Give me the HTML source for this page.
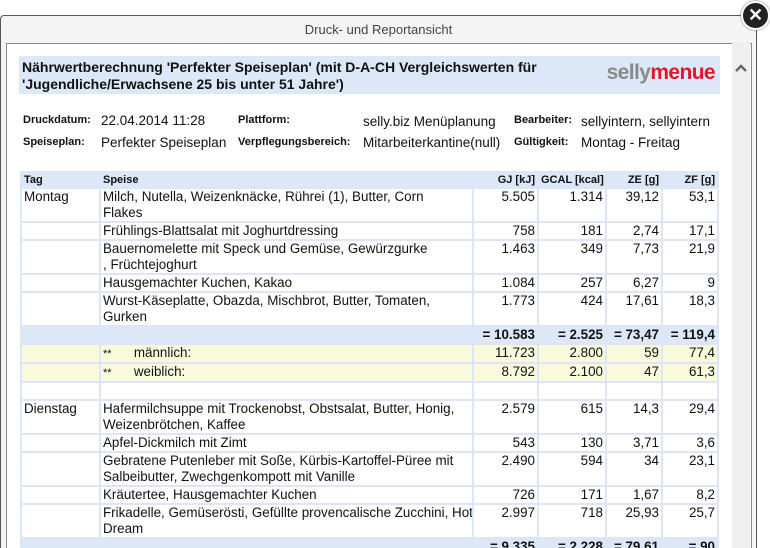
<!DOCTYPE html>
<html><head><meta charset="utf-8"><style>
*{margin:0;padding:0;box-sizing:border-box}
html,body{width:770px;height:548px;overflow:hidden}
body{background:#fff;font-family:"Liberation Sans",Arial,sans-serif;position:relative;color:#111}
.dlg{position:absolute;left:0;top:15px;width:757px;height:545px;border:1px solid #555;border-radius:4px 0 0 0;background:#f4f4f4}
.ttl{position:absolute;left:0;top:0;width:755px;height:28px;text-align:center;font-size:13px;line-height:28px;color:#444}
.inner{position:absolute;left:5px;top:27px;width:746px;height:530px;border:1px solid #888;background:#fff}
.sb{position:absolute;left:732px;top:42px;width:18px;height:506px;background:#efefef}
.close{position:absolute;left:741px;top:1px;width:29px;height:29px;border-radius:50%;background:#222;border:2px solid #fff;box-shadow:0 0 2px #666;color:#fff;font-size:18px;font-weight:bold;text-align:center;line-height:25px}
.hdr{position:absolute;left:19px;top:56px;width:701px;height:38px;background:#dce8f7}
.hdr .t{position:absolute;left:3px;top:3px;font-size:14px;font-weight:bold;line-height:17px;width:560px}
.logo{position:absolute;right:5px;top:5px;font-size:21px;font-weight:700;letter-spacing:-0.6px;line-height:24px}
.lb{position:absolute;font-size:11px;font-weight:bold}
.v{position:absolute;font-size:13.5px}
table{position:absolute;left:20px;top:171px;border-collapse:separate;border-spacing:2px;background:#dde6f4;table-layout:fixed;width:699px}
td{background:#fff;font-size:13.4px;line-height:16px;padding:0 2px;vertical-align:top;height:16px;white-space:nowrap;overflow:hidden}
td.n{text-align:right}
tr.h td{background:#dce8f7;font-size:11px;font-weight:bold;height:13px;line-height:14px}
tr.s td{background:#dce8f7;font-weight:bold}
tr.y td{background:#f8fadb}
</style></head><body>
<div class="dlg"><div class="ttl">Druck- und Reportansicht</div><div class="inner"></div></div>
<div class="sb"><svg width="18" height="20" style="position:absolute;left:0;top:16px"><path d="M4 13 L9 8 L14 13" stroke="#666" stroke-width="2.4" fill="none"/></svg></div>
<div class="close">✕</div>
<div class="hdr"><div class="t">Nährwertberechnung 'Perfekter Speiseplan' (mit D-A-CH Vergleichswerten für 'Jugendliche/Erwachsene 25 bis unter 51 Jahre')</div><div class="logo"><span style="color:#8a8a8a">selly</span><span style="color:#e4142b">menue</span></div></div>
<div class="lb" style="left:23px;top:114px">Druckdatum:</div><div class="v" style="left:101px;top:113px">22.04.2014 11:28</div>
<div class="lb" style="left:238px;top:114px">Plattform:</div><div class="v" style="left:363px;top:114px">selly.biz Menüplanung</div>
<div class="lb" style="left:514px;top:114px">Bearbeiter:</div><div class="v" style="left:581px;top:114px">sellyintern, sellyintern</div>
<div class="lb" style="left:23px;top:136px">Speiseplan:</div><div class="v" style="left:101px;top:135px">Perfekter Speiseplan</div>
<div class="lb" style="left:238px;top:136px">Verpflegungsbereich:</div><div class="v" style="left:363px;top:135px">Mitarbeiterkantine(null)</div>
<div class="lb" style="left:514px;top:136px">Gültigkeit:</div><div class="v" style="left:581px;top:135px">Montag - Freitag</div>
<table>
<colgroup><col style="width:77px"><col style="width:371px"><col style="width:63px"><col style="width:66px"><col style="width:54px"><col style="width:54px"></colgroup>
<tr class="h"><td>Tag</td><td>Speise</td><td class="n">GJ [kJ]</td><td class="n">GCAL [kcal]</td><td class="n">ZE [g]</td><td class="n">ZF [g]</td></tr>
<tr><td>Montag</td><td>Milch, Nutella, Weizenknäcke, Rührei (1), Butter, Corn<br>Flakes</td><td class="n">5.505</td><td class="n">1.314</td><td class="n">39,12</td><td class="n">53,1</td></tr>
<tr><td></td><td>Frühlings-Blattsalat mit Joghurtdressing</td><td class="n">758</td><td class="n">181</td><td class="n">2,74</td><td class="n">17,1</td></tr>
<tr><td></td><td>Bauernomelette mit Speck und Gemüse, Gewürzgurke<br>, Früchtejoghurt</td><td class="n">1.463</td><td class="n">349</td><td class="n">7,73</td><td class="n">21,9</td></tr>
<tr><td></td><td>Hausgemachter Kuchen, Kakao</td><td class="n">1.084</td><td class="n">257</td><td class="n">6,27</td><td class="n">9</td></tr>
<tr><td></td><td>Wurst-Käseplatte, Obazda, Mischbrot, Butter, Tomaten,<br>Gurken</td><td class="n">1.773</td><td class="n">424</td><td class="n">17,61</td><td class="n">18,3</td></tr>
<tr class="s"><td></td><td></td><td class="n">= 10.583</td><td class="n">= 2.525</td><td class="n">= 73,47</td><td class="n">= 119,4</td></tr>
<tr class="y"><td></td><td><span style="font-size:11px">**</span>&nbsp;&nbsp;&nbsp;&nbsp;&nbsp;&nbsp;männlich:</td><td class="n">11.723</td><td class="n">2.800</td><td class="n">59</td><td class="n">77,4</td></tr>
<tr class="y"><td></td><td><span style="font-size:11px">**</span>&nbsp;&nbsp;&nbsp;&nbsp;&nbsp;&nbsp;weiblich:</td><td class="n">8.792</td><td class="n">2.100</td><td class="n">47</td><td class="n">61,3</td></tr>
<tr><td></td><td></td><td></td><td></td><td></td><td></td></tr>
<tr><td>Dienstag</td><td>Hafermilchsuppe mit Trockenobst, Obstsalat, Butter, Honig,<br>Weizenbrötchen, Kaffee</td><td class="n">2.579</td><td class="n">615</td><td class="n">14,3</td><td class="n">29,4</td></tr>
<tr><td></td><td>Apfel-Dickmilch mit Zimt</td><td class="n">543</td><td class="n">130</td><td class="n">3,71</td><td class="n">3,6</td></tr>
<tr><td></td><td>Gebratene Putenleber mit Soße, Kürbis-Kartoffel-Püree mit<br>Salbeibutter, Zwechgenkompott mit Vanille</td><td class="n">2.490</td><td class="n">594</td><td class="n">34</td><td class="n">23,1</td></tr>
<tr><td></td><td>Kräutertee, Hausgemachter Kuchen</td><td class="n">726</td><td class="n">171</td><td class="n">1,67</td><td class="n">8,2</td></tr>
<tr><td></td><td>Frikadelle, Gemüserösti, Gefüllte provencalische Zucchini, Hot<br>Dream</td><td class="n">2.997</td><td class="n">718</td><td class="n">25,93</td><td class="n">25,7</td></tr>
<tr class="s"><td></td><td></td><td class="n">= 9.335</td><td class="n">= 2.228</td><td class="n">= 79,61</td><td class="n">= 90</td></tr>
</table>
</body></html>
